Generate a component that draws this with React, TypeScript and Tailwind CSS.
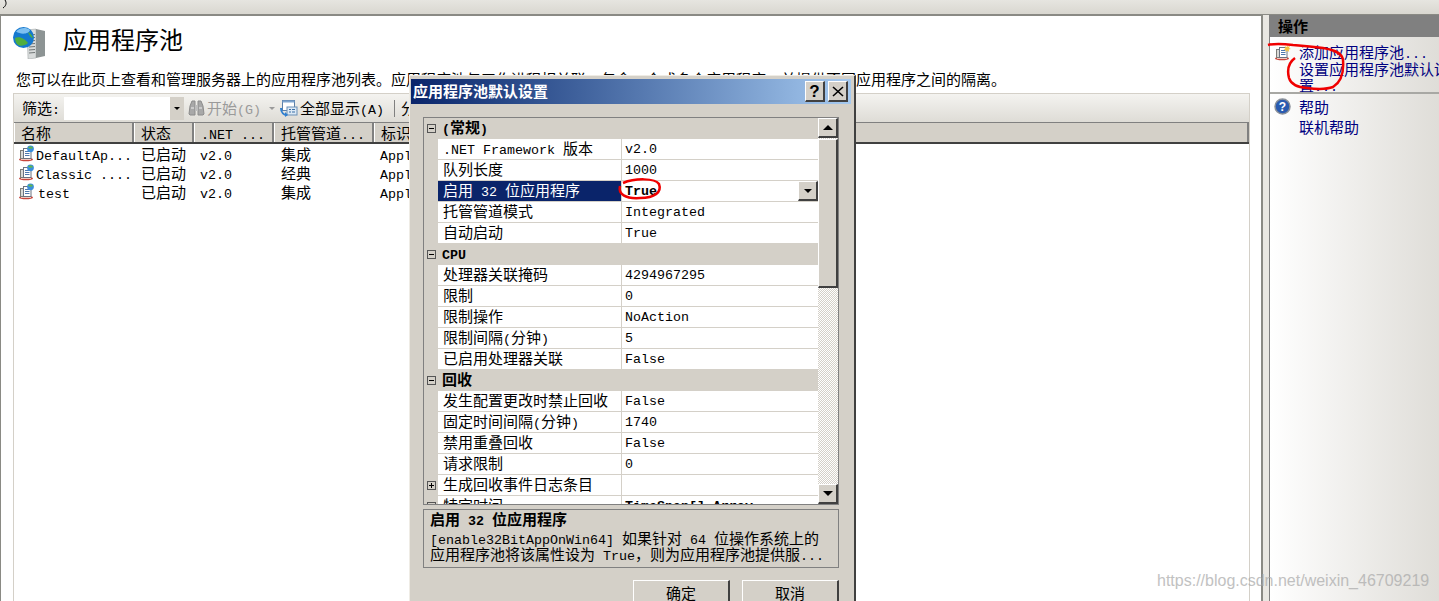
import type { ReactNode } from "react";

// latin runs are narrower than the cjk cell, like SimSun
function T({ children }: { children: string }) {
  const parts = children.split(/([\x20-\x7e]+)/).filter(Boolean);
  return (
    <>
      {parts.map((p, i) =>
        /^[\x20-\x7e]+$/.test(p) ? (
          <span key={i} className="font-['Liberation_Mono'] text-[13.33px] leading-[0] whitespace-pre">
            {p}
          </span>
        ) : (
          <span key={i}>{p}</span>
        )
      )}
    </>
  );
}

function PoolIcon({ star }: { star?: boolean }) {
  return (
    <svg width="17" height="17" viewBox="0 0 17 17" className="shrink-0">
      <ellipse cx="8" cy="14.5" rx="7" ry="1.8" fill="#c8463c" />
      <path d="M3 14.5h10" stroke="#f0c8c0" />
      <rect x="2.5" y="5.5" width="8" height="8" fill="#d9d9d6" stroke="#7c7c78" />
      <rect x="5.5" y="3.5" width="7.5" height="10" fill="#fff" stroke="#6b7280" />
      <path d="M7 6.5h4.5M7 8.5h4.5M7 10.5h4.5" stroke="#4f78ad" />
      {star ? (
        <path d="M13 0.5l.8 2.2 2.2-.8-1 2.1 1.9 1-2.2.6.5 2.3-2-1.3-1.6 1.6.1-2.3-2.2-.5 2-1.1-.8-2.1 2.2.8z" fill="#f4c23c" />
      ) : (
        <>
          <circle cx="12.5" cy="3.8" r="3.4" fill="#3b8fdc" />
          <path d="M10 2.5c1-1.4 3.5-1.6 5 .2-1 1.4-3.6 1.3-5-.2z" fill="#62b84c" />
        </>
      )}
    </svg>
  );
}

function TitleIcon() {
  return (
    <svg width="32" height="32" viewBox="0 0 32 32" className="shrink-0">
      <path d="M14 3 L23 2 L23 31 L15 32 Z" fill="#d8dbdb" stroke="#9aa0a0" strokeWidth="0.5" />
      <path d="M23 2 L32 4 L32 29 L23 31 Z" fill="#8d9494" />
      <path d="M16 8l6-.5M16 11l6-.5M16 14l6-.5M16 17l6-.5M16 20l6-.5M16 23l6-.5M16 26l6-.5" stroke="#6f7575" strokeWidth="1" />
      <circle cx="10.5" cy="10.5" r="10.5" fill="#1579cf" />
      <path d="M3 4.5C7 .5 13 0 17 3c-1 4-9 5-14 1.5z" fill="#7fc0f0" />
      <path d="M2 11c5-2 10 1 13 5-3 3-9 4-11 1-1-1-2-4-2-6z" fill="#4fae3f" />
      <path d="M15 5c2 1 4 3 5 6-2 0-4-3-5-6z" fill="#4fae3f" />
    </svg>
  );
}

function Binoculars() {
  return (
    <svg width="17" height="18" viewBox="0 0 17 18" className="shrink-0">
      <path d="M1 15 L2 7 L4 2 H7 V16 H2 Z M10 2 H13 L15 7 L16 15 L15 16 H10 Z" fill="#a8a8a8" stroke="#8c8c8c" />
      <rect x="7" y="6" width="3" height="6" fill="#bdbdbd" />
      <path d="M3 9h3M11 9h3" stroke="#d6d6d6" strokeWidth="1.5" />
    </svg>
  );
}

function ShowAll() {
  return (
    <svg width="18" height="18" viewBox="0 0 18 18" className="shrink-0">
      <rect x="2.5" y="1.5" width="12" height="10" fill="#fff" stroke="#5a7fa8" />
      <rect x="2.5" y="1.5" width="12" height="2" fill="#7fa5cf" />
      <rect x="7" y="8" width="10" height="8" fill="#dce9f5" stroke="#6a8fb5" />
      <path d="M9 10.5h2M12 10.5h3M9 13h2M12 13h3" stroke="#3a6ea5" />
      <path d="M1 9c0 5 3 7 6 7" fill="none" stroke="#2f7fd0" strokeWidth="2" />
      <path d="M5 13l3 3-3 2z" fill="#2f7fd0" />
    </svg>
  );
}

function ColHead({ w, children, grow }: { w?: string; children: string; grow?: boolean }) {
  return (
    <div
      className={`${w ?? ""} ${grow ? "grow" : "shrink-0"} h-full bg-[#d4d0c8] border-r-2 border-r-[#808080] border-l border-l-white pl-[6px] leading-[20px] whitespace-nowrap overflow-hidden`}
    >
      <T>{children}</T>
    </div>
  );
}

const pools = [
  { name: "DefaultAp...", state: "已启动", net: "v2.0", mode: "集成", id: "ApplicationPoolIdentity" },
  { name: "Classic ....", state: "已启动", net: "v2.0", mode: "经典", id: "ApplicationPoolIdentity" },
  { name: "test", state: "已启动", net: "v2.0", mode: "集成", id: "ApplicationPoolIdentity" },
];

type Row = { kind: "cat" | "row"; name: string; value?: string; selected?: boolean; closed?: boolean; bold?: boolean };

const rows: Row[] = [
  { kind: "cat", name: "(常规)" },
  { kind: "row", name: ".NET Framework 版本", value: "v2.0" },
  { kind: "row", name: "队列长度", value: "1000" },
  { kind: "row", name: "启用 32 位应用程序", value: "True", selected: true },
  { kind: "row", name: "托管管道模式", value: "Integrated" },
  { kind: "row", name: "自动启动", value: "True" },
  { kind: "cat", name: "CPU" },
  { kind: "row", name: "处理器关联掩码", value: "4294967295" },
  { kind: "row", name: "限制", value: "0" },
  { kind: "row", name: "限制操作", value: "NoAction" },
  { kind: "row", name: "限制间隔(分钟)", value: "5" },
  { kind: "row", name: "已启用处理器关联", value: "False" },
  { kind: "cat", name: "回收" },
  { kind: "row", name: "发生配置更改时禁止回收", value: "False" },
  { kind: "row", name: "固定时间间隔(分钟)", value: "1740" },
  { kind: "row", name: "禁用重叠回收", value: "False" },
  { kind: "row", name: "请求限制", value: "0" },
  { kind: "row", name: "生成回收事件日志条目", value: "", closed: true },
  { kind: "row", name: "特定时间", value: "TimeSpan[] Array", closed: true, bold: true },
];

function Box({ plus }: { plus?: boolean }) {
  return (
    <span className="relative block w-[9px] h-[9px] border border-[#555] bg-transparent">
      <span className="absolute left-[1px] top-[3px] w-[5px] h-px bg-black" />
      {plus && <span className="absolute left-[3px] top-[1px] w-px h-[5px] bg-black" />}
    </span>
  );
}

function GridRow({ row }: { row: Row }) {
  if (row.kind === "cat") {
    return (
      <div className="flex h-[21px] font-bold">
        <div className="w-[14px] shrink-0 pl-[3px] pt-[6px]">
          <Box />
        </div>
        <div className="pl-[4px] leading-[17px]">
          <T>{row.name}</T>
        </div>
      </div>
    );
  }
  return (
    <div className="flex h-[21px]">
      <div className="w-[14px] shrink-0 pl-[3px] pt-[6px]">{row.closed && <Box plus />}</div>
      <div
        className={`w-[183px] shrink-0 pl-[5px] leading-[18px] border-b border-[#d4d0c8] whitespace-nowrap ${
          row.selected ? "bg-[#0a246a] text-white" : "bg-white"
        }`}
      >
        <T>{row.name}</T>
      </div>
      <div
        className={`grow flex justify-between pl-[3px] leading-[16px] bg-white border-l border-b border-[#d4d0c8] whitespace-nowrap overflow-hidden ${
          row.selected || row.bold ? "font-bold" : ""
        }`}
      >
        <span>
          <T>{row.value ?? ""}</T>
        </span>
        {row.selected && (
          <span className="w-[20px] h-[20px] flex items-center justify-center bg-[#d4d0c8] border-t border-l border-t-white border-l-white border-b-2 border-r-2 border-b-[#404040] border-r-[#404040]">
            <span className="border-x-[4px] border-x-transparent border-t-[4px] border-t-black" />
          </span>
        )}
      </div>
    </div>
  );
}

function ScrollBtn({ up }: { up?: boolean }) {
  return (
    <div className="h-[20px] flex items-center justify-center bg-[#d4d0c8] border-t border-l border-t-white border-l-white border-b-2 border-r-2 border-b-[#404040] border-r-[#404040]">
      <span
        className={
          up
            ? "border-x-[5px] border-x-transparent border-b-[5px] border-b-black"
            : "border-x-[5px] border-x-transparent border-t-[5px] border-t-black"
        }
      />
    </div>
  );
}

function DlgButton({ children }: { children: ReactNode }) {
  return (
    <div className="w-[97px] h-[30px] bg-[#d4d0c8] border-t border-l border-t-white border-l-white border-r-2 border-b-2 border-r-[#404040] border-b-[#404040] text-center leading-[24px]">
      {children}
    </div>
  );
}

function Dialog() {
  return (
    <div className="absolute left-[409px] top-[75px] w-[447px] h-[540px] bg-[#d4d0c8] border-t border-l border-[#efece5] border-r-2 border-r-[#404040] pl-px pt-[3px]">
      <div className="flex items-center justify-between w-[440px] h-[25px] pl-[2px] pr-[3px] bg-gradient-to-r from-[#0a246a] to-[#a6caf0] text-white font-bold">
        <span className="leading-[23px] h-[25px]">应用程序池默认设置</span>
        <div className="flex gap-[3px]">
          <div className="w-[20px] h-[21px] flex items-center justify-center bg-[#d4d0c8] border-t border-l border-t-white border-l-white border-r-2 border-b-2 border-r-[#404040] border-b-[#404040] text-black text-[17px] font-['Liberation_Sans'] font-bold leading-none">
            ?
          </div>
          <div className="w-[20px] h-[21px] flex items-center justify-center bg-[#d4d0c8] border-t border-l border-t-white border-l-white border-r-2 border-b-2 border-r-[#404040] border-b-[#404040]">
            <svg width="12" height="11" viewBox="0 0 12 11">
              <path d="M1 1 L11 10 M11 1 L1 10" stroke="#000" strokeWidth="1.6" />
            </svg>
          </div>
        </div>
      </div>

      {/* property grid */}
      <div className="ml-[12px] mt-[13px] w-[416px] h-[388px] border border-[#808080] flex overflow-hidden">
        <div className="w-[394px] shrink-0 overflow-hidden">
          {rows.map((r) => (
            <GridRow key={r.name} row={r} />
          ))}
        </div>
        <div className="w-[20px] shrink-0 flex flex-col bg-[repeating-conic-gradient(#d4d0c8_0_25%,#ffffff_0_50%)] bg-[length:2px_2px]">
          <ScrollBtn up />
          <div className="h-[149px] mt-px bg-[#d4d0c8] border-t border-l border-t-white border-l-white border-b-2 border-r-2 border-b-[#404040] border-r-[#404040]" />
          <div className="grow" />
          <ScrollBtn />
        </div>
      </div>

      {/* description */}
      <div className="ml-[12px] mt-[4px] w-[416px] h-[59px] border border-[#808080] pl-[6px]">
        <div className="font-bold leading-[18px]">
          <T>启用 32 位应用程序</T>
        </div>
        <div className="leading-[16px] mt-[2px] whitespace-nowrap">
          <T>[enable32BitAppOnWin64] 如果针对 64 位操作系统上的</T>
        </div>
        <div className="leading-[16px] whitespace-nowrap">
          <T>应用程序池将该属性设为 True，则为应用程序池提供服...</T>
        </div>
      </div>

      <div className="ml-[222px] mt-[12px] flex gap-[12px]">
        <DlgButton>确定</DlgButton>
        <DlgButton>取消</DlgButton>
      </div>
    </div>
  );
}

export default function App() {
  return (
    <div className="relative w-[1439px] h-[601px] overflow-hidden bg-[#e9e7e2] text-black text-[15px] font-['Noto_Sans_CJK_SC',sans-serif]">
      {/* top strip */}
      <div className="h-[15px] bg-gradient-to-b from-[#e6e5e0] to-[#d9d7d0] border-b border-[#8a8a84]" />

      <div className="flex h-[586px]">
        {/* main pane */}
        <div className="w-[1263px] shrink-0 bg-white border-l border-t border-r-2 border-[#8a8a84] flex flex-col">
          <div className="flex items-start h-[46px] pl-[12px]">
            <div className="mt-[11px]">
              <TitleIcon />
            </div>
            <span className="ml-[18px] mt-[10px] text-[24px] leading-[26px]">应用程序池</span>
          </div>
          <div className="pl-[15px] mt-[8px] leading-[18px] whitespace-nowrap h-[20px]">
            <T>您可以在此页上查看和管理服务器上的应用程序池列表。应用程序池与工作进程相关联，包含一个或多个应用程序，并提供不同应用程序之间的隔离。</T>
          </div>

          <div className="ml-[12px] mt-[3px] w-[1237px] grow flex flex-col border-x border-[#d4d0c8]">
            {/* toolbar */}
            <div className="flex items-center h-[29px] bg-gradient-to-b from-[#f4f3f0] to-[#dedcd6] border-t border-[#d4d0c8] pl-[8px] shrink-0">
              <span className="leading-[20px] h-[20px]">
                <T>筛选:</T>
              </span>
              <div className="ml-[4px] w-[106px] h-[23px] bg-white" />
              <div className="w-[14px] h-[23px] bg-[#d4d0c8] flex items-center justify-center">
                <span className="border-x-[3px] border-x-transparent border-t-[3px] border-t-black" />
              </div>
              <div className="ml-[4px]">
                <Binoculars />
              </div>
              <span className="ml-[2px] text-[#9a9a9a] leading-[20px] h-[20px]">
                <T>开始(G)</T>
              </span>
              <span className="ml-[8px] border-x-[3px] border-x-transparent border-t-[3px] border-t-[#9a9a9a]" />
              <div className="ml-[5px]">
                <ShowAll />
              </div>
              <span className="ml-[2px] leading-[20px] h-[20px]">
                <T>全部显示(A)</T>
              </span>
              <span className="ml-[10px] w-px h-[17px] bg-[#808080]" />
              <span className="ml-[6px] leading-[20px] h-[20px]">分组依据</span>
            </div>

            {/* list header */}
            <div className="flex border-t border-t-[#808080] border-b-2 border-b-[#404040] shrink-0 h-[22px]">
              <ColHead w="w-[120px]">名称</ColHead>
              <ColHead w="w-[60px]">状态</ColHead>
              <ColHead w="w-[80px]">.NET ...</ColHead>
              <ColHead w="w-[100px]">托管管道...</ColHead>
              <ColHead grow>标识</ColHead>
            </div>

            {/* list body */}
            <div className="grow bg-white">
              {pools.map((p) => (
                <div key={p.name} className="flex h-[19px] items-center whitespace-nowrap leading-[18px]">
                  <div className="w-[120px] shrink-0 flex items-center pl-[4px]">
                    <PoolIcon />
                    <span className={p.name === "test" ? "ml-[3px]" : "ml-px"}>
                      <T>{p.name}</T>
                    </span>
                  </div>
                  <div className="w-[60px] shrink-0 pl-[7px]">{p.state}</div>
                  <div className="w-[80px] shrink-0 pl-[6px]">
                    <T>{p.net}</T>
                  </div>
                  <div className="w-[100px] shrink-0 pl-[7px]">{p.mode}</div>
                  <div className="pl-[6px]">
                    <T>{p.id}</T>
                  </div>
                </div>
              ))}
            </div>
          </div>
        </div>

        {/* actions pane */}
        <div className="ml-[6px] w-[170px] shrink-0 border-l border-[#808080] bg-gradient-to-r from-white to-[#dfddd8] flex flex-col">
          <div className="h-[22px] bg-[#808080] pl-[8px] font-bold leading-[22px]">操作</div>
          <div className="mt-[7px] flex pl-[4px] text-[#000080] h-[50px] border-b-2 border-[#a8a8a4] overflow-hidden">
            <div className="shrink-0 w-[25px]">
              <PoolIcon star />
            </div>
            <div className="whitespace-nowrap">
              <div className="leading-[16px]">
                <T>添加应用程序池...</T>
              </div>
              <div className="leading-[16px] mt-px">设置应用程序池默认设</div>
              <div className="leading-[16px]">
                <T>置...</T>
              </div>
            </div>
          </div>
          <div className="mt-[3px] pl-[4px] flex text-[#000080]">
            <div className="w-[25px] shrink-0 pt-[1px]">
              <svg width="17" height="17" viewBox="0 0 17 17">
                <circle cx="8.5" cy="8.5" r="7.5" fill="#2a5bb0" stroke="#8a9099" strokeWidth="1.5" />
                <text x="8.5" y="13" textAnchor="middle" fontSize="12" fontWeight="bold" fill="#fff" fontFamily="Liberation Sans">
                  ?
                </text>
              </svg>
            </div>
            <div>
              <div className="leading-[20px]">帮助</div>
              <div className="leading-[20px]">联机帮助</div>
            </div>
          </div>
        </div>
      </div>

      <Dialog />

      {/* red pen marks drawn on the screenshot */}
      <svg className="absolute left-0 top-0" width="1439" height="601" fill="none" stroke="#f00000" strokeWidth="2.5">
        <path d="M623 183C635 178 655 178 659 184C662 192 655 198 640 198C625 199 618 194 620 186" />
        <path d="M1268 45C1276 43 1285 44 1293 45C1305 46 1315 47 1323 48C1335 50 1342 53 1343 60C1344 72 1341 82 1333 87C1325 90 1315 89 1307 88C1298 87 1291 85 1289 78C1287 70 1288 63 1295 58" />
      </svg>
      {/* stray pen mark, top left */}
      <svg className="absolute left-0 top-0" width="12" height="12" fill="none" stroke="#000" strokeWidth="1">
        <path d="M5 0C7 3 6 6 3 8" />
      </svg>

      <div className="absolute left-[1157px] top-[572px] text-[#a8a8a8] text-[16px] leading-[18px] font-['Liberation_Sans'] opacity-70">
        https://blog.csdn.net/weixin_46709219
      </div>
    </div>
  );
}
